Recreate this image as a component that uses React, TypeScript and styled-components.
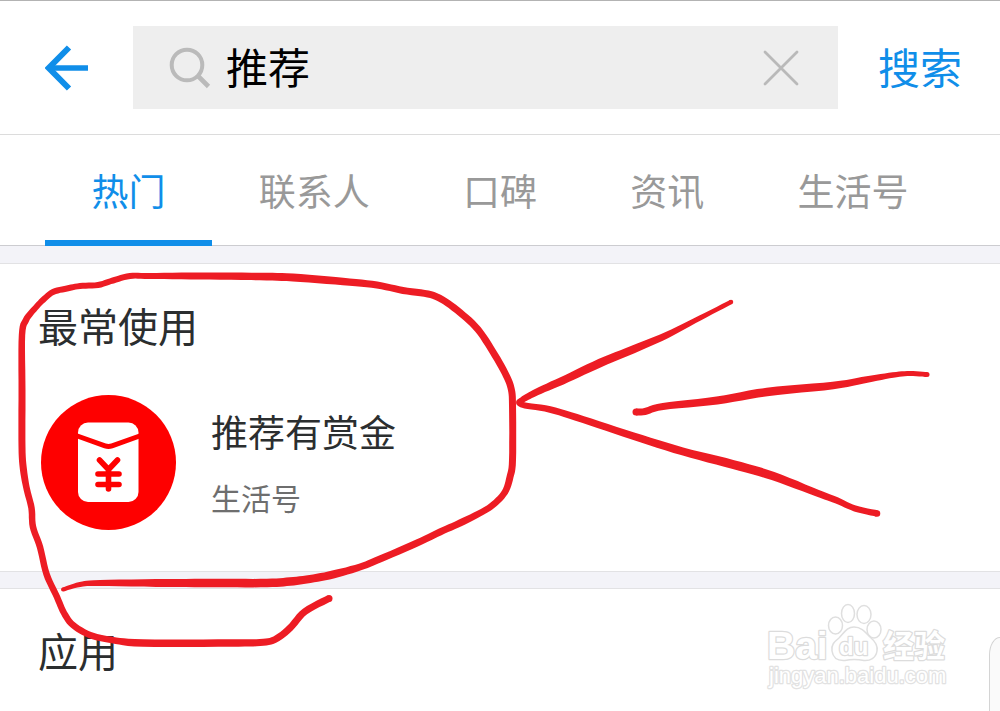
import React, { useState } from 'react';
import styled, { createGlobalStyle } from 'styled-components';

const BLUE = '#108ee9';
const RULE = '#e2e2e4';

const GlobalStyle = createGlobalStyle`
  * { box-sizing: border-box; }
  body {
    margin: 0;
    background: #fff;
    font-family: "Noto Sans CJK SC", "Noto Sans", sans-serif;
    color: #2b2e2f;
  }
  button, input { font-family: inherit; }
  h2, h3, p { margin: 0; font-weight: 400; }
`;

const Page = styled.div`
  position: relative;
  min-height: 100vh;
  overflow: hidden;
`;

const Header = styled.header`
  display: flex;
  align-items: center;
  padding: 25px 38px 25px 45px;
  border-top: 1px solid #b3b3b3;
  border-bottom: 1px solid #dcdcdc;
`;

const PlainButton = styled.button`
  display: flex;
  flex: none;
  padding: 0;
  border: 0;
  background: none;
  cursor: pointer;
`;

const SearchBox = styled.label`
  display: flex;
  flex: 1;
  min-width: 0;
  align-items: center;
  margin: 0 40px 0 45px;
  padding: 0 39px 0 36px;
  height: 83px;
  background: #eee;
`;

const SearchInput = styled.input`
  flex: 1;
  min-width: 0;
  height: 64px;
  padding: 0 15px 4px;
  border: 0;
  outline: 0;
  background: transparent;
  color: #000;
  font-size: 42px;
`;

const SearchButton = styled(PlainButton)`
  padding-bottom: 4px;
  color: ${BLUE};
  font-size: 42px;
  line-height: 64px;
`;

const Tabs = styled.nav`
  display: flex;
  padding: 0 45px;
  border-bottom: 1px solid #ccccd0;
`;

const Tab = styled.button<{ $active: boolean }>`
  flex: 1 0 auto;
  height: 111px;
  margin-bottom: -1px;
  padding: 4px 46px 0;
  border: 0;
  border-bottom: 6px solid ${(p) => (p.$active ? BLUE : 'transparent')};
  background: none;
  color: ${(p) => (p.$active ? BLUE : '#999')};
  font-size: 37px;
  line-height: 48px;
  cursor: pointer;
`;

const Section = styled.section`
  padding: 37px 38px 41px;
  border-bottom: 1px solid ${RULE};

  &:last-of-type {
    padding-bottom: 0;
    border-bottom: 0;
  }
`;

const Divider = styled.div`
  height: 17px;
  border-bottom: 1px solid ${RULE};
  background: #f3f3f8;
`;

const TabsDivider = styled(Divider)`
  height: 18px;
`;

const SectionTitle = styled.h2`
  font-size: 40px;
  line-height: 48px;
`;

const Result = styled.a`
  display: flex;
  align-items: center;
  gap: 35px;
  margin-top: 46px;
  padding-left: 3px;
  color: inherit;
  text-decoration: none;
`;

const ResultText = styled.div`
  display: grid;
  gap: 24px;
`;

const ResultName = styled.h3`
  font-size: 37px;
  line-height: 44px;
`;

const ResultKind = styled.p`
  color: #6e6e6e;
  font-size: 30px;
  line-height: 40px;
`;

const Annotation = styled.svg`
  position: absolute;
  top: 0;
  left: 0;
  pointer-events: none;
`;

const Watermark = styled.svg`
  position: absolute;
  right: 50px;
  bottom: 16px;
  pointer-events: none;
`;

const EdgePanel = styled.div`
  position: absolute;
  right: 0;
  bottom: 0;
  width: 11px;
  height: 74px;
  border: 1px solid #d4d4d4;
  border-right: 0;
  border-bottom: 0;
  border-top-left-radius: 11px 18px;
  background: #fafafa;
`;

type InkPoint = [x: number, y: number, width: number];

const LOOP: InkPoint[] = [
  [329, 598.5, 7], [305, 611.5, 7], [290, 628, 7], [275, 639.5, 7], [260, 642.5, 7], [230, 643, 7.5],
  [143, 643, 7.5], [112, 640, 6.5], [90, 635, 6.5], [73, 625, 6.5], [64, 613, 6.5],
  [57, 597, 6.5], [46.5, 574, 6.5], [40, 547, 6.5], [33, 527, 6.5], [31.5, 508, 6.5],
  [27, 490, 6.5], [23.500, 470, 7], [22, 447, 7], [22, 390, 7], [22, 335, 6.5], [26, 320, 6.5],
  [34, 309.5, 6], [43, 300, 6], [53, 292, 6], [67, 288.5, 6], [80, 286, 6], [98, 285, 6],
  [113, 280.5, 6], [130, 276, 6], [150, 276, 6], [200, 276, 7], [260, 276.5, 7.5], [293, 277.5, 8],
  [343, 281.5, 7.5], [377, 285, 7], [403, 290.5, 7], [428, 294, 7], [442, 299.5, 7], [460, 312.5, 7],
  [478, 329.5, 7], [493, 352, 7], [505, 373, 7], [511, 388, 7], [512.5, 405, 7], [512.5, 460, 7],
  [510, 477, 7], [505, 492, 6.5], [494, 504, 6.5], [482, 512, 6.5], [460, 523, 7], [440, 532, 7],
  [417, 543, 7], [380, 559, 7], [360, 567, 7], [333, 574.5, 8], [310, 579, 8], [290, 581.5, 8.5],
  [267, 583, 8.5], [220, 583, 8.5], [167, 583, 8], [100, 583, 6], [80, 584.5, 5], [63, 589.5, 4],
];

const ARROW_TOP: InkPoint[] = [
  [731, 302, 4.5], [700, 318, 5], [667, 335, 6.5], [633, 349.5, 8], [600, 363, 8.5],
  [567, 378.5, 8], [540, 390.5, 7], [527, 397, 6.5], [519, 402, 5.5],
];

const ARROW_BOTTOM: InkPoint[] = [
  [519, 403, 5.5], [525, 405.5, 6], [550, 409.5, 6.5], [583, 419.5, 7], [633, 436, 7.5],
  [683, 451.5, 8], [733, 464.5, 9], [773, 476, 8.5], [817, 493, 7], [837, 500.5, 6.5],
  [855, 508.5, 6], [877, 513.5, 6.5],
];

const ARROW_SHAFT: InkPoint[] = [
  [636, 412, 7], [645, 411.5, 7], [663, 406.5, 7], [717, 400.5, 8], [767, 392, 8.5],
  [833, 385.5, 7.5], [867, 379.5, 6.5], [893, 375, 5.5], [910, 373.5, 5], [927, 374.5, 5],
];

const STEPS = 6;

function spline(a: number, b: number, c: number, d: number, t: number) {
  return (
    0.5 *
    (2 * b + (c - a) * t + (2 * a - 5 * b + 4 * c - d) * t * t + (3 * b - a - 3 * c + d) * t * t * t)
  );
}

// Turns pen samples into the outline of a stroke whose width varies along its length.
function strokeOutline(points: InkPoint[]) {
  const fine: number[][] = [];
  const at = (i: number) => points[Math.max(0, Math.min(points.length - 1, i))];
  for (let i = 0; i < points.length - 1; i++) {
    for (let s = 0; s < STEPS; s++) {
      fine.push([0, 1, 2].map((k) => spline(at(i - 1)[k], at(i)[k], at(i + 1)[k], at(i + 2)[k], s / STEPS)));
    }
  }
  fine.push([...points[points.length - 1]]);

  const left: string[] = [];
  const right: string[] = [];
  fine.forEach(([x, y, w], i) => {
    const prev = fine[Math.max(0, i - 1)];
    const next = fine[Math.min(fine.length - 1, i + 1)];
    const dx = next[0] - prev[0];
    const dy = next[1] - prev[1];
    const len = Math.hypot(dx, dy) || 1;
    const nx = (-dy / len) * (w / 2);
    const ny = (dx / len) * (w / 2);
    left.push(`${(x + nx).toFixed(1)} ${(y + ny).toFixed(1)}`);
    right.unshift(`${(x - nx).toFixed(1)} ${(y - ny).toFixed(1)}`);
  });
  return `M${left.concat(right).join('L')}Z`;
}

function InkStroke({ points }: { points: InkPoint[] }) {
  const ends = [points[0], points[points.length - 1]];
  return (
    <g fill="#ed1c24">
      <path d={strokeOutline(points)} />
      {ends.map(([x, y, w]) => (
        <circle key={`${x}-${y}`} cx={x} cy={y} r={w / 2} />
      ))}
    </g>
  );
}

function BackIcon() {
  return (
    <svg width="43" height="46" viewBox="0 0 43 46" fill="none" stroke={BLUE} aria-hidden="true">
      <path d="M24 2.500L3.800 23L24 43.500" strokeWidth="6" />
      <path d="M5 23H43" strokeWidth="5.600" />
    </svg>
  );
}

function SearchIcon() {
  return (
    <svg width="42" height="42" viewBox="0 0 42 42" fill="none" stroke="#bababa" strokeWidth="4" aria-hidden="true">
      <circle cx="18" cy="18" r="15.300" />
      <path d="M28.500 28.500L39.500 39.500" strokeWidth="4.600" />
    </svg>
  );
}

function ClearIcon() {
  return (
    <svg width="36" height="36" viewBox="0 0 36 36" fill="none" stroke="#b9b9b9" strokeWidth="2.800" aria-hidden="true">
      <path d="M2 2L34 34M34 2L2 34" strokeLinecap="round" />
    </svg>
  );
}

function RedPacketIcon() {
  return (
    <svg width="135" height="135" viewBox="0 0 135 135" aria-hidden="true">
      <circle cx="67.500" cy="67.500" r="67.500" fill="#fe0000" />
      <rect x="37" y="27.500" width="60.500" height="79.500" rx="10" fill="#fff" />
      <g fill="none" stroke="#fe0000" strokeLinejoin="round">
        <path d="M35 40.500L64 50.800Q67.500 52 71 50.800L100 40.500" strokeWidth="5" />
        <path
          d="M58.500 65L67.500 74.500L76.500 65M67.500 74.500V94M57 79H78M57 89.500H78"
          strokeWidth="5.600"
          strokeLinecap="round"
        />
      </g>
    </svg>
  );
}

function BaiduWatermark() {
  return (
    <Watermark width="184" height="92" viewBox="0 0 184 92" role="img" aria-label="Baidu 经验">
      <g fill="#fff" stroke="#dfdfdf" strokeWidth="1.500">
        <ellipse cx="69.500" cy="22.500" rx="7" ry="8.500" />
        <ellipse cx="82" cy="10.500" rx="6.500" ry="9" />
        <ellipse cx="98" cy="11.500" rx="7" ry="9" />
        <ellipse cx="108" cy="26.500" rx="7" ry="8.500" />
        <path d="M88 24C96 24 100 30 104 34C110 39 112 43 111 48C110 55 104 58 98 57.500C91 56 85 56 79 57.500C72 58 67 55 66 48C65 42 68 39 73 35C78 30 81 24 88 24Z" />
      </g>
      <g
        fill="#fff"
        stroke="#dcdcdc"
        strokeWidth="2.500"
        strokeLinejoin="round"
        paintOrder="stroke"
        fontFamily='"Liberation Sans", "Noto Sans CJK SC", sans-serif'
        fontWeight="700"
      >
        <text x="1" y="56" fontSize="39">Bai</text>
        <text x="73" y="52" fontSize="24">du</text>
        <text x="117" y="54" fontSize="31" fontFamily='"Noto Sans CJK SC", sans-serif'>经验</text>
        <text x="3" y="80" fontSize="22" fontWeight="400" stroke="#e2e2e2">jingyan.baidu.com</text>
      </g>
    </Watermark>
  );
}

const TABS = ['热门', '联系人', '口碑', '资讯', '生活号'];

export default function App() {
  const [query, setQuery] = useState('推荐');
  const [active, setActive] = useState(TABS[0]);

  return (
    <Page>
      <GlobalStyle />
      <Header>
        <PlainButton type="button" aria-label="返回">
          <BackIcon />
        </PlainButton>
        <SearchBox>
          <SearchIcon />
          <SearchInput aria-label="搜索" value={query} onChange={(e) => setQuery(e.target.value)} />
          <PlainButton type="button" aria-label="清除" onClick={() => setQuery('')}>
            <ClearIcon />
          </PlainButton>
        </SearchBox>
        <SearchButton type="button">搜索</SearchButton>
      </Header>

      <Tabs>
        {TABS.map((name) => (
          <Tab key={name} type="button" $active={name === active} onClick={() => setActive(name)}>
            {name}
          </Tab>
        ))}
      </Tabs>

      <main>
        <TabsDivider />
        <Section>
          <SectionTitle>最常使用</SectionTitle>
          <Result href="#reward">
            <RedPacketIcon />
            <ResultText>
              <ResultName>推荐有赏金</ResultName>
              <ResultKind>生活号</ResultKind>
            </ResultText>
          </Result>
        </Section>
        <Divider />
        <Section>
          <SectionTitle>应用</SectionTitle>
        </Section>
      </main>

      <EdgePanel />
      <BaiduWatermark />
      <Annotation width="940" height="660" viewBox="0 0 940 660" aria-hidden="true">
        <InkStroke points={LOOP} />
        <InkStroke points={ARROW_TOP} />
        <InkStroke points={ARROW_BOTTOM} />
        <InkStroke points={ARROW_SHAFT} />
      </Annotation>
    </Page>
  );
}
